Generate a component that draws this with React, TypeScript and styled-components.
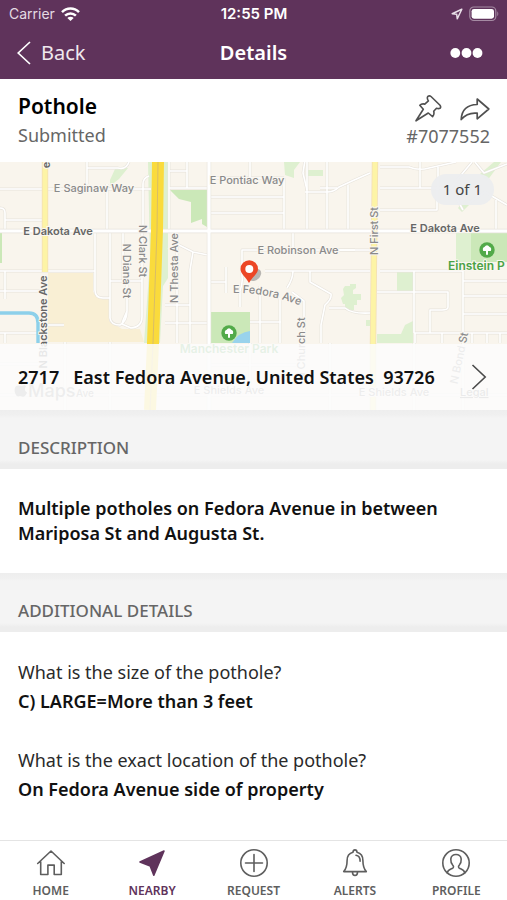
import React from "react";
import styled, { createGlobalStyle } from "styled-components";

const plum = "#5f335b";
const ink = "#111111";
const grey = "#666666";

const GlobalStyle = createGlobalStyle`
  *, *::before, *::after { box-sizing: border-box; }
  body { margin: 0; background: #ffffff; }
  button { font: inherit; color: inherit; background: none; border: 0; padding: 0; cursor: pointer; }
  h1, h2, p, dl, dt, dd { margin: 0; font-weight: inherit; font-size: inherit; }
`;

const Screen = styled.div`
  display: flex;
  flex-direction: column;
  min-height: 100vh;
  font-family: "Noto Sans", "Open Sans", sans-serif;
  color: ${ink};
  background: #ffffff;
`;

const Header = styled.header`
  background: ${plum};
  color: #ffffff;
  padding-bottom: 1px;
`;

const StatusBar = styled.div`
  display: grid;
  grid-template-columns: 1fr auto 1fr;
  align-items: center;
  height: 28px;
  padding: 0 8px 0 9px;
  font-family: Inter, sans-serif;
  font-size: 14px;
  line-height: 20px;
`;

const StatusGroup = styled.div<{ $end?: boolean }>`
  display: flex;
  align-items: center;
  gap: 6px;
  justify-content: ${(p) => (p.$end ? "flex-end" : "flex-start")};
  color: ${(p) => (p.$end ? "#ffffff" : "#e4dbe3")};
`;

const Clock = styled.span`
  font-size: 15px;
  font-weight: 600;
`;

const NavBar = styled.nav`
  display: grid;
  grid-template-columns: 1fr auto 1fr;
  align-items: center;
  height: 50px;
  padding: 0 17px;
  font-size: 20px;
  line-height: 28px;
`;

const BackButton = styled.button`
  display: flex;
  align-items: center;
  gap: 10px;
  justify-self: start;
  && { color: #efe8ee; }
`;

const MoreButton = styled.button`
  display: flex;
  justify-self: end;
  margin-right: 7px;
`;

const NavTitle = styled.h1`
  && { font-weight: 600; }
`;

const Summary = styled.section`
  display: flex;
  justify-content: space-between;
  padding: 12px 17px 12px 18px;
  height: 83px;
`;

const SummaryText = styled.div`
  display: flex;
  flex-direction: column;
`;

const SummaryTitle = styled.h2`
  && { font-size: 21px; font-weight: 600; }
  line-height: 30px;
  color: #000000;
`;

const Muted = styled.p`
  font-size: 18px;
  line-height: 28px;
  color: ${grey};
`;

const SummarySide = styled.div`
  display: flex;
  flex-direction: column;
  align-items: flex-end;
`;

const Actions = styled.div`
  display: flex;
  gap: 18px;
  height: 32px;
  align-items: flex-end;
  color: #505050;
`;

const IconButton = styled.button`
  display: flex;
`;

const MapPanel = styled.section`
  position: relative;
  height: 248px;
  background: #f9f5ed;
  overflow: hidden;
`;

const MapSvg = styled.svg`
  display: block;
  width: 100%;
  height: 100%;
  font-family: Inter, sans-serif;
`;

const Counter = styled.span`
  position: absolute;
  top: 12px;
  right: 13px;
  padding: 3px 12px;
  border-radius: 16px;
  background: rgba(236, 237, 239, 0.95);
  color: #444444;
  font-size: 15px;
  line-height: 25px;
`;

const AddressButton = styled.button`
  && {
    position: absolute;
    left: 0;
    right: 0;
    bottom: 0;
    display: flex;
    justify-content: space-between;
    align-items: center;
    height: 66px;
    padding: 0 20px 0 18px;
    background: rgba(251, 252, 252, 0.87);
    font-size: 18px;
    line-height: 26px;
    font-weight: 600;
    white-space: pre;
    text-align: left;
  }
`;

const SectionHeading = styled.h2`
  && { font-size: 17px; font-weight: 500; }
  height: 59px;
  padding: 26px 18px 9px;
  line-height: 24px;
  color: ${grey};
  background: linear-gradient(#eeeeee 0, #f0f0f0 5px, #f4f4f4 8px, #f4f4f4 50px, #ededed 54px, #ededed 59px);
`;

const Description = styled.p`
  padding: 27px 18px;
  font-size: 18px;
  line-height: 25px;
  && { font-weight: 600; }
`;

const Answers = styled.dl`
  display: flex;
  flex-direction: column;
  gap: 30px;
  flex: 1;
  padding: 26px 18px;
  font-size: 18px;
  line-height: 29px;
`;

const Question = styled.dt`
  color: #2a2a2a;
`;

const Answer = styled.dd`
  && { font-weight: 600; }
`;

const TabBar = styled.nav`
  display: flex;
  height: 60px;
  border-top: 1px solid #e4e4e4;
  background: #ffffff;
`;

const Tab = styled.button<{ $active?: boolean }>`
  && {
    flex: 1;
    display: flex;
    flex-direction: column;
    align-items: center;
    gap: 5px;
    padding-top: 7px;
    font-size: 12px;
    line-height: 16px;
    font-weight: 600;
    color: ${(p) => (p.$active ? plum : "#5e5e5e")};
  }
`;

const WifiIcon = () => (
  <svg width="19" height="14" viewBox="0 0 19 14" aria-hidden="true">
    <g fill="none" stroke="#ffffff" strokeWidth="2.5">
      <path d="M1 5.2C5.8.4 13.2.4 18 5.2" />
      <path d="M4.1 8.7c3.1-3 7.7-3 10.8 0" />
    </g>
    <path d="M6.3 10.9c1.9-1.7 4.5-1.7 6.4 0L9.5 14z" fill="#ffffff" />
  </svg>
);

const LocationIcon = () => (
  <svg width="12" height="12" viewBox="0 0 12 12" aria-hidden="true">
    <path d="M10.8 1.2 1.2 5.8l4.5.5.6 4.5z" fill="none" stroke="#e9dfe8" strokeWidth="1.5" strokeLinejoin="round" />
  </svg>
);

const BatteryIcon = () => (
  <svg width="30" height="16" viewBox="0 0 30 16" aria-hidden="true">
    <rect x=".8" y="1" width="26" height="13.5" rx="4" fill="none" stroke="#a58ba3" strokeWidth="1.2" />
    <rect x="2.6" y="2.9" width="22.4" height="9.8" rx="2.4" fill="#ffffff" />
    <path d="M28.3 5.5c1.3.6 1.3 4 0 4.6z" fill="#a58ba3" />
  </svg>
);

const BackIcon = () => (
  <svg width="14" height="24" viewBox="0 0 14 24" fill="none" stroke="#ffffff" strokeWidth="1.7" aria-hidden="true">
    <path d="M13 1 1.2 12 13 23" />
  </svg>
);

const DotsIcon = () => (
  <svg width="33" height="12" viewBox="0 0 33 12" fill="#ffffff" aria-hidden="true">
    <circle cx="5.3" cy="6" r="4.9" />
    <circle cx="16.5" cy="6" r="4.9" />
    <circle cx="27.5" cy="6" r="4.9" />
  </svg>
);

const PinIcon = () => (
  <svg width="28" height="28" viewBox="0 0 28 28" fill="none" stroke="currentColor" strokeWidth="1.6" strokeLinejoin="round" aria-hidden="true">
    <path d="M13.8 2.4Q15.5 1.3 17 2.5L26 11.3Q27.3 13.2 26 14.3 24.5 15 22.5 14.2L19.7 17.3Q20.6 20.5 18.6 22.7L14.3 19 2 26.8 9.3 15.2 5.8 11.2Q7.6 9.4 10.8 10.1L14.4 6.9Q12.6 4 13.8 2.4Z" />
  </svg>
);

const ShareIcon = () => (
  <svg width="30" height="26" viewBox="0 0 30 26" fill="none" stroke="currentColor" strokeWidth="1.7" strokeLinejoin="round" aria-hidden="true">
    <path d="M17.2 3 28.8 13 17.2 22.8v-5.6C10.6 16.5 6 17.8 1.2 23.5 1.6 14.5 7 8.8 17.2 8.5z" />
  </svg>
);

const ChevronIcon = () => (
  <svg width="16" height="26" viewBox="0 0 16 26" fill="none" stroke="#4a4a4a" strokeWidth="1.6" aria-hidden="true">
    <path d="m1.5 1 12.7 12L1.5 25" />
  </svg>
);

const tabIconProps = {
  width: 30,
  height: 30,
  viewBox: "0 0 30 30",
  fill: "none",
  stroke: "currentColor",
  strokeWidth: 1.6,
  strokeLinejoin: "round" as const,
  strokeLinecap: "round" as const,
  "aria-hidden": true,
};

const HomeIcon = () => (
  <svg {...tabIconProps}>
    <path d="M1.7 15.5 15 3l13.2 12.5M4.7 13.5v13h7.2v-9.4h6.3v9.4h7.1v-13" />
  </svg>
);

const NearbyIcon = () => (
  <svg {...tabIconProps}>
    <path d="M27 3 16.8 27.2l-3.5-9.1L3 13.9z" fill="currentColor" />
  </svg>
);

const RequestIcon = () => (
  <svg {...tabIconProps}>
    <circle cx="15" cy="15" r="13.2" />
    <path d="M15 6.5v17M6.5 15h17" />
  </svg>
);

const AlertsIcon = () => (
  <svg {...tabIconProps}>
    <path d="M13 4.3c.2-3.3 3.8-3.3 4 0 4.2 1.1 5.9 4.1 5.9 8.1 0 5.1.8 8.1 3.4 11.2H3.7c2.6-3.1 3.4-6.1 3.4-11.2 0-4 1.7-7 5.9-8.1Z" />
    <path d="M12.5 23.9c0 4.8 5 4.8 5 0M16 7.3c3 .5 4.2 2.5 4.1 6" />
  </svg>
);

const ProfileIcon = () => (
  <svg {...tabIconProps}>
    <circle cx="15" cy="15" r="13.2" />
    <path d="M6.2 24.8c.6-3 2.8-3.4 5.4-4.6 1.2-.6 1.1-2.1.2-3-1.5-1.7-2.2-3.6-2-6.1.3-6.2 10.1-6.2 10.4 0 .2 2.5-.5 4.4-2 6.1-.9.9-1 2.4.2 3 2.6 1.2 4.8 1.6 5.4 4.6" />
  </svg>
);

const smallRoads = [
  "M0 189H151M87 162V184M87 168H118Q126 170 129 162M107 184V231M143 231V184Q143 178 149 176M0 208Q5 208 5 213V231M5 220H42",
  "M0 271H95M0 291H44M5 271V299M0 333H38M5 333V343M45 325H64",
  "M95 231V290Q95 298 103 298H110V318Q111 325 120 325Q127 321 127 311V281M110 231V298M110 281H142M123 231V281M127 311Q122 322 122 324L131 328Q142 327 142 317V231",
  "M169 162V231M169 188H208M170 171H187V162M187 171V188M177 231V343M177 244L193 252 208 255M193 252 190 270V343M165 305H190M165 323H208",
  "M211 178H284M211 197H284M211 213H284M284 178V230M250 162V178M307 162V230M327 162V230M305 192H327Q334 192 339 187L352 181 370 173M348 185V230",
  "M305 160 303 173 307 190M293 231V250M242 262V250H370M242 250V276Q243 283 240 291V307M265 271H370M293 271Q293 279 287 288M226 267V293M211 282H226M260 286V343M280 298V343M250 322H281M292 292 304 301V343",
  "M310 271V282L331 294Q332 299 325 305L321 325V343M329 308H345Q352 314 370 313M337 250H355M320 188H337",
  "M380 188H440M380 210H437V188M420 162V188M380 167H409Q419 171 429 168L456 162M438 167V190M437 188H451L457 180 472 162M451 188 463 210M475 162 484 173 507 164M470 202 485 192 507 205M496 200V230",
  "M380 271H414V333M414 271H463V343M377 292H448V307Q448 310 442 310H430V333M414 333H507M463 281H507M463 296H507M463 314H507M415 333V343M442 333V343M472 333V343M487 333V343M500 333V343",
  "M0 364H44M0 395H507M65 342V410M110 342V410M211 365H300M250 343V395M330 343V410M414 343V410M463 343V410",
];

interface Label {
  x: number;
  y: number;
  text: string;
  size?: number;
  turn?: number;
  bold?: boolean;
  fill?: string;
}

const labels: Label[] = [
  { x: 94, y: 192, text: "E Saginaw Way" },
  { x: 247, y: 184, text: "E Pontiac Way" },
  { x: 58, y: 235, text: "E Dakota Ave", bold: true },
  { x: 445, y: 232, text: "E Dakota Ave", bold: true },
  { x: 298, y: 254, text: "E Robinson Ave" },
  { x: 143, y: 251, text: "N Clark St", turn: 90 },
  { x: 127, y: 271, text: "N Diana St", turn: 90 },
  { x: 174, y: 268, text: "N Thesta Ave", turn: -90 },
  { x: 374, y: 231, text: "N First St", turn: -90 },
  { x: 301, y: 349, text: "N Church St", turn: -90 },
  { x: 459, y: 358, text: "N Bond St", turn: -78 },
  { x: 43, y: 322, text: "N Blackstone Ave", turn: -90, bold: true },
  { x: 46, y: 165, text: "e", turn: -90, bold: true },
  { x: 229, y: 353, text: "Manchester Park", size: 12, fill: "#57a956", bold: true },
  { x: 229, y: 394, text: "E Shields Ave" },
  { x: 394, y: 396, text: "E Shields Ave" },
  { x: 85, y: 397, text: "Ave", size: 10 },
];

const TreeMarker = ({ x, y }: { x: number; y: number }) => (
  <g transform={`translate(${x} ${y})`}>
    <circle r="7.7" fill="#52aa49" />
    <path d="M-1 4.8V1H-3.8Q-5-2 -2.6-2.9Q0-6.5 2.6-2.9Q5-2 3.8 1H1V4.8z" fill="#ffffff" />
  </g>
);

const StreetMap = () => (
  <MapSvg viewBox="0 162 507 248" preserveAspectRatio="xMidYMid slice" role="img" aria-label="Map around East Fedora Avenue">
    <rect y="162" width="507" height="248" fill="#f9f5ed" />
    <path d="M48 273H93V292L103 299H109V321L122 329 140 329 144 342H48z" fill="#f9efd4" />
    <g fill="#cbe8b8">
      <path d="M170 190H207V227L202 224 202 219 191 223V202L179 199z" />
      <path d="M211 312H250V343H211zM471 231H507V262H471z" />
      <path d="M0 233H2V263H0z" />
    </g>
    <g fill="#def0d0">
      <path d="M148 162H168V278L163 286 160 343H144L150 260z" />
      <path d="M110 180 115 169 128 168 119 179 110 186zM284 162H300L294 170V178L285 175zM308 170H323V176H308z" />
      <path d="M397 271H413V291H397zM456 233H471V262H456zM377 334H401L405 325 413 321V343H377zM343 289 345 286H350V284H356V288L353 290V294H361V300H357V305H354V310H345V304H343L341 298 344 295zM494 162H501L487 181 480 174zM458 208 470 193 470 204 462 212zM366 320H371V326H366z" />
    </g>
    <path d="M250 331V343H232Q239 332 250 331z" fill="#99d3ec" />
    <g fill="none" strokeLinejoin="round">
      {smallRoads.map((d) => (
        <path key={`e${d}`} d={d} stroke="#e7e3dc" strokeWidth="2.8" />
      ))}
      {smallRoads.map((d) => (
        <path key={d} d={d} stroke="#ffffff" strokeWidth="1.6" />
      ))}
      <path d="M0 231H507M209 162V410" stroke="#e7e3dc" strokeWidth="4.4" />
      <path d="M0 231H507M209 162V410" stroke="#ffffff" strokeWidth="3.2" />
      <path d="M0 313H29Q38 313 38 323V343" stroke="#8dd0ea" strokeWidth="3.4" />
      <path d="M45 162V272M375 162 373 343V410" stroke="#f3dfb4" strokeWidth="6.4" />
      <path d="M45 162V272M375 162 373 343V410" stroke="#fdf4a6" strokeWidth="4.8" />
      <path d="M158 162 157 230 153 343 150 410" stroke="#fadb3c" strokeWidth="12" />
      <path d="M158 162 157 230 153 343 150 410" stroke="#d9bd67" strokeWidth="1" />
    </g>
    {labels.map((l) => (
      <text
        key={`${l.text}${l.x}`}
        transform={`translate(${l.x} ${l.y}) rotate(${l.turn ?? 0})`}
        dy={l.turn ? 4 : 0}
        textAnchor="middle"
        fontSize={l.size ?? 11}
        fontWeight={l.bold ? 600 : 500}
        fill={l.fill ?? (l.bold ? "#666666" : "#8a8a8a")}
        stroke="#faf7f1"
        strokeWidth="2"
        paintOrder="stroke"
      >
        {l.text}
      </text>
    ))}
    <path id="fedora" d="M233 293Q264 292 302 306" fill="none" />
    <text fontSize="11" fontWeight="500" fill="#8a8a8a" stroke="#faf7f1" strokeWidth="2" paintOrder="stroke">
      <textPath href="#fedora">E Fedora Ave</textPath>
    </text>
    <TreeMarker x={229} y={333} />
    <TreeMarker x={487} y={250} />
    <text x="448" y="270" fontSize="12" fontWeight="600" fill="#4ba345" stroke="#faf7f1" strokeWidth="2" paintOrder="stroke">
      Einstein P
    </text>
    <ellipse cx="255" cy="275" rx="7" ry="5" transform="rotate(-42 255 275)" fill="#777777" opacity=".5" />
    <path d="M249 283C246 277 240.5 274 240.5 269A8.7 8.7 0 0 1 258 269C258 274 252 277 249 283z" fill="#ec4625" />
    <circle cx="249.3" cy="269" r="4" fill="#ffffff" />
    <path d="M22 386c2-1.500 4-.5 4 .5-2 2-1 5 1 6-1 3-3 5-5 4q-2-1-4 0c-4-1-5-11 0-11q2 0 4 .5zM21 385q0-3 3-4 0 3-3 4z" fill="#8a8a8a" />
    <text x="28" y="397" fontSize="18" fontWeight="500" fill="#8a8a8a">
      Maps
    </text>
    <text x="460" y="396" fontSize="11" fontWeight="500" fill="#777777" textDecoration="underline">
      Legal
    </text>
  </MapSvg>
);

const answers = [
  { question: "What is the size of the pothole?", answer: "C) LARGE=More than 3 feet" },
  { question: "What is the exact location of the pothole?", answer: "On Fedora Avenue side of property" },
];

const tabs = [
  { name: "HOME", Icon: HomeIcon },
  { name: "NEARBY", Icon: NearbyIcon },
  { name: "REQUEST", Icon: RequestIcon },
  { name: "ALERTS", Icon: AlertsIcon },
  { name: "PROFILE", Icon: ProfileIcon },
];

export default function App() {
  return (
    <Screen>
      <GlobalStyle />
      <Header>
        <StatusBar>
          <StatusGroup>
            <span>Carrier</span>
            <WifiIcon />
          </StatusGroup>
          <Clock>12:55 PM</Clock>
          <StatusGroup $end>
            <LocationIcon />
            <BatteryIcon />
          </StatusGroup>
        </StatusBar>
        <NavBar>
          <BackButton>
            <BackIcon />
            Back
          </BackButton>
          <NavTitle>Details</NavTitle>
          <MoreButton aria-label="More options">
            <DotsIcon />
          </MoreButton>
        </NavBar>
      </Header>
      <Summary>
        <SummaryText>
          <SummaryTitle>Pothole</SummaryTitle>
          <Muted>Submitted</Muted>
        </SummaryText>
        <SummarySide>
          <Actions>
            <IconButton aria-label="Pin request">
              <PinIcon />
            </IconButton>
            <IconButton aria-label="Share request">
              <ShareIcon />
            </IconButton>
          </Actions>
          <Muted>#7077552</Muted>
        </SummarySide>
      </Summary>
      <MapPanel>
        <StreetMap />
        <Counter>1 of 1</Counter>
        <AddressButton>
          <span>{"2717   East Fedora Avenue, United States  93726"}</span>
          <ChevronIcon />
        </AddressButton>
      </MapPanel>
      <SectionHeading>DESCRIPTION</SectionHeading>
      <Description>Multiple potholes on Fedora Avenue in between Mariposa St and Augusta St.</Description>
      <SectionHeading>ADDITIONAL DETAILS</SectionHeading>
      <Answers>
        {answers.map((a) => (
          <div key={a.question}>
            <Question>{a.question}</Question>
            <Answer>{a.answer}</Answer>
          </div>
        ))}
      </Answers>
      <TabBar>
        {tabs.map(({ name, Icon }) => (
          <Tab key={name} $active={name === "NEARBY"} aria-current={name === "NEARBY" ? "page" : undefined}>
            <Icon />
            {name}
          </Tab>
        ))}
      </TabBar>
    </Screen>
  );
}
